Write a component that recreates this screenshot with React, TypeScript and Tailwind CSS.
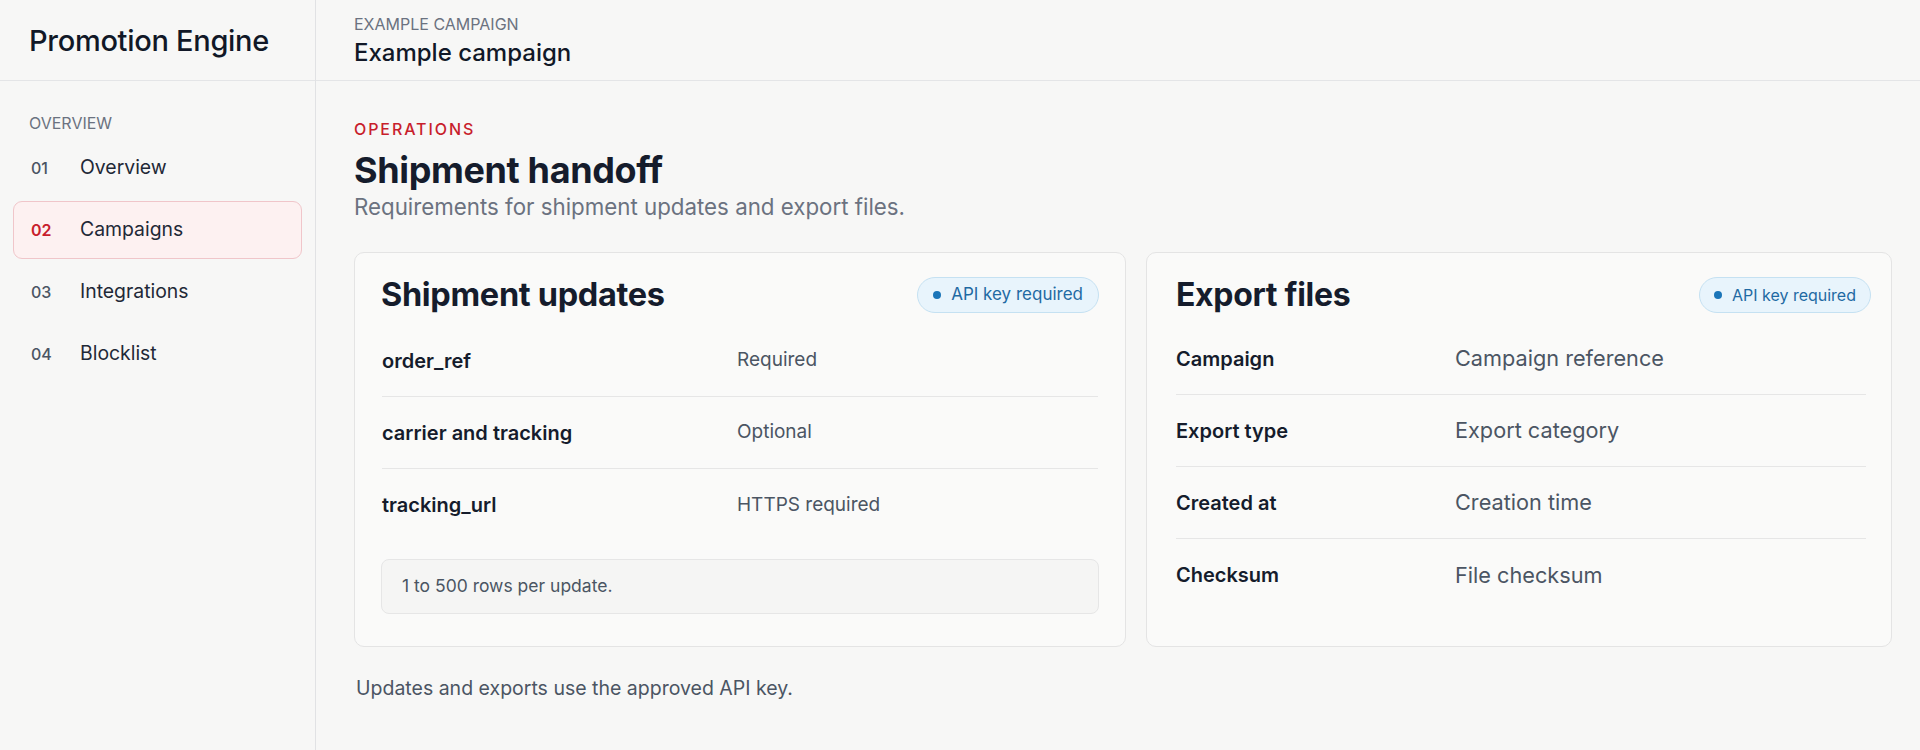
import React from "react";

const navItems = [
  { n: "01", label: "Overview", active: false },
  { n: "02", label: "Campaigns", active: true },
  { n: "03", label: "Integrations", active: false },
  { n: "04", label: "Blocklist", active: false },
];

function Badge({ small }: { small?: boolean }) {
  return (
    <span
      className={
        small
          ? "flex h-[36px] items-center gap-[10px] rounded-full border border-[#c5e1f2] bg-[#e8f4fc] px-[14px] text-[16px] text-[#1f6aa3]"
          : "flex h-[36px] items-center gap-[10px] rounded-full border border-[#c5e1f2] bg-[#e8f4fc] px-[15px] text-[17px] text-[#1f6aa3]"
      }
    >
      <span className="h-[8px] w-[8px] rounded-full bg-[#1b75b8]" />
      API key required
    </span>
  );
}

export default function App() {
  const shipRows = [
    ["order_ref", "Required"],
    ["carrier and tracking", "Optional"],
    ["tracking_url", "HTTPS required"],
  ];
  const exportRows = [
    ["Campaign", "Campaign reference"],
    ["Export type", "Export category"],
    ["Created at", "Creation time"],
    ["Checksum", "File checksum"],
  ];
  return (
    <div className="flex min-h-[750px] w-full bg-[#f7f7f6] font-['Inter',sans-serif] text-[#151c2c]">
      <aside className="w-[316px] shrink-0 border-r border-[#e1e2e4]">
        <div className="flex h-[81px] items-center border-b border-[#e4e5e7] px-[29px]">
          <span className="mt-[2px] text-[29px] font-medium tracking-[-0.01em] text-[#111827]">
            Promotion Engine
          </span>
        </div>
        <div className="px-[13px] pt-[30px]">
          <div className="pl-[16px] text-[16px] leading-[24px] text-[#6b7280]">OVERVIEW</div>
          <nav className="mt-[4px] flex flex-col gap-[4px]">
            {navItems.map((it) => (
              <div
                key={it.n}
                className={
                  it.active
                    ? "flex h-[58px] items-center rounded-[9px] border border-[#f0c6ca] bg-[#fdf1f1] px-[17px]"
                    : "flex h-[58px] items-center rounded-[9px] border border-transparent px-[17px]"
                }
              >
                <span
                  className={
                    it.active
                      ? "w-[49px] text-[16px] font-semibold text-[#c81e2c]"
                      : "w-[49px] text-[16px] font-medium text-[#4b5563]"
                  }
                >
                  {it.n}
                </span>
                <span className="text-[19.4px] text-[#1f2937]">{it.label}</span>
              </div>
            ))}
          </nav>
        </div>
      </aside>
      <main className="flex-1">
        <header className="h-[81px] border-b border-[#e4e5e7] px-[38px] pt-[14px]">
          <div className="text-[16px] leading-[20px] text-[#6b7280]">EXAMPLE CAMPAIGN</div>
          <div className="mt-[4px] text-[24px] font-medium leading-[30px] text-[#111827]">
            Example campaign
          </div>
        </header>
        <section className="pl-[38px] pr-[28px] pt-[38px]">
          <div className="text-[16px] font-medium leading-[20px] tracking-[0.12em] text-[#c81e2c]">
            OPERATIONS
          </div>
          <h1 className="mt-[9px] text-[36px] font-bold leading-[44px] tracking-[-0.01em] text-[#151c2c]">
            Shipment handoff
          </h1>
          <p className="text-[22.3px] leading-[30px] text-[#6b7280]">
            Requirements for shipment updates and export files.
          </p>
          <div className="mt-[30px] flex gap-[20px]">
            <div className="w-[772px] shrink-0 rounded-[10px] border border-[#e4e4e4] bg-[#fafaf9] px-[26px] pb-[32px] pt-[24px]">
              <div className="flex h-[36px] items-center justify-between">
                <h2 className="text-[32.5px] font-bold leading-[36px] tracking-[-0.01em]">Shipment updates</h2>
                <Badge />
              </div>
              <div className="mt-[12px] px-[1px]">
                {shipRows.map(([k, v], i) => (
                  <div
                    key={k}
                    className={
                      i < shipRows.length - 1
                        ? "grid h-[72px] grid-cols-[355px_1fr] items-center border-b border-[#e6e6e6]"
                        : "grid h-[72px] grid-cols-[355px_1fr] items-center"
                    }
                  >
                    <span className="text-[20px] font-semibold">{k}</span>
                    <span className="text-[19px] text-[#4b5563]">{v}</span>
                  </div>
                ))}
              </div>
              <div className="mt-[18px] flex h-[55px] items-center rounded-[8px] border border-[#e6e6e6] bg-[#f5f5f4] px-[20px] text-[17.5px] text-[#4b5563]">
                1 to 500 rows per update.
              </div>
            </div>
            <div className="flex-1 rounded-[10px] border border-[#e4e4e4] bg-[#fafaf9] pb-[35px] pl-[29px] pr-[20px] pt-[24px]">
              <div className="flex h-[36px] items-center justify-between">
                <h2 className="text-[32px] font-bold leading-[36px] tracking-[-0.01em]">Export files</h2>
                <Badge small />
              </div>
              <div className="mr-[5px] mt-[10px]">
                {exportRows.map(([k, v], i) => (
                  <div
                    key={k}
                    className={
                      i < exportRows.length - 1
                        ? "grid h-[72px] grid-cols-[279px_1fr] items-center border-b border-[#e6e6e6]"
                        : "grid h-[72px] grid-cols-[279px_1fr] items-center"
                    }
                  >
                    <span className="text-[20px] font-semibold">{k}</span>
                    <span className="text-[21.7px] text-[#4b5563]">{v}</span>
                  </div>
                ))}
              </div>
            </div>
          </div>
          <p className="mt-[27px] pl-[2px] text-[19.5px] leading-[28px] text-[#4b5563]">
            Updates and exports use the approved API key.
          </p>
        </section>
      </main>
    </div>
  );
}
